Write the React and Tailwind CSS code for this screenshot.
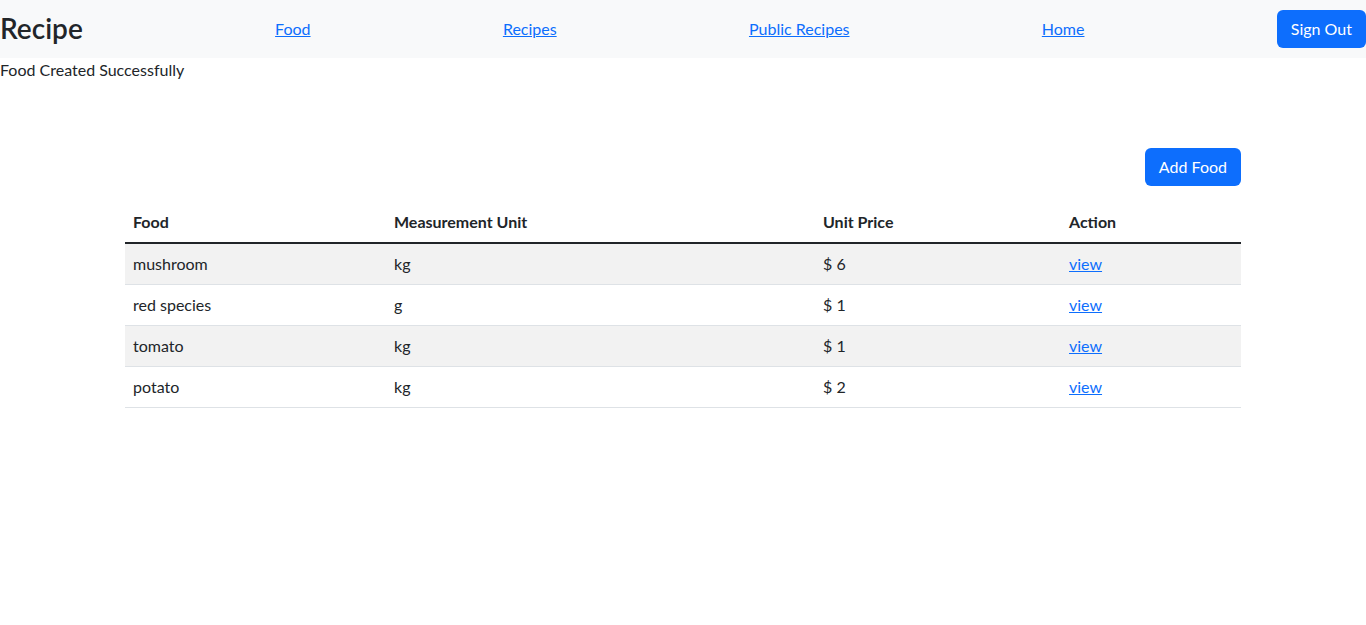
const foods = [
  { name: 'mushroom', unit: 'kg', price: 6 },
  { name: 'red species', unit: 'g', price: 1 },
  { name: 'tomato', unit: 'kg', price: 1 },
  { name: 'potato', unit: 'kg', price: 2 }
]

export default function App() {
  return (
    <div className="min-h-screen bg-white text-[#212529] font-['Lato','Liberation_Sans',sans-serif] text-base leading-6">
      {/* Navbar */}
      <nav className="h-[58px] bg-[#f8f9fa] flex items-center justify-between">
        <h3 className="text-[28px] font-semibold leading-[1.2]">Recipe</h3>
        <a href="#" className="text-[#0d6efd] underline">Food</a>
        <a href="#" className="text-[#0d6efd] underline">Recipes</a>
        <a href="#" className="text-[#0d6efd] underline">Public Recipes</a>
        <a href="#" className="text-[#0d6efd] underline">Home</a>
        <button className="bg-[#0d6efd] text-white rounded-md px-[14px] h-[38px]">Sign Out</button>
      </nav>

      <p className="h-6">Food Created Successfully</p>

      <div className="w-[1116px] mx-auto mt-[66px]">
        <div className="flex justify-end mb-4">
          <button className="bg-[#0d6efd] text-white rounded-md px-[14px] h-[38px]">Add Food</button>
        </div>

        <table className="w-full border-collapse text-left">
          <thead>
            <tr className="border-b-2 border-[#212529]">
              <th className="w-[261px] px-2 py-2 font-bold">Food</th>
              <th className="w-[429px] px-2 py-2 font-bold">Measurement Unit</th>
              <th className="w-[246px] px-2 py-2 font-bold">Unit Price</th>
              <th className="px-2 py-2 font-bold">Action</th>
            </tr>
          </thead>
          <tbody>
            {foods.map((f, i) => (
              <tr key={i} className={`border-b border-[#dee2e6] ${i % 2 === 0 ? 'bg-[#f2f2f2]' : 'bg-white'}`}>
                <td className="px-2 py-2">{f.name}</td>
                <td className="px-2 py-2">{f.unit}</td>
                <td className="px-2 py-2">$ {f.price}</td>
                <td className="px-2 py-2">
                  <a href="#" className="text-[#0d6efd] underline">view</a>
                </td>
              </tr>
            ))}
          </tbody>
        </table>
      </div>
    </div>
  )
}
